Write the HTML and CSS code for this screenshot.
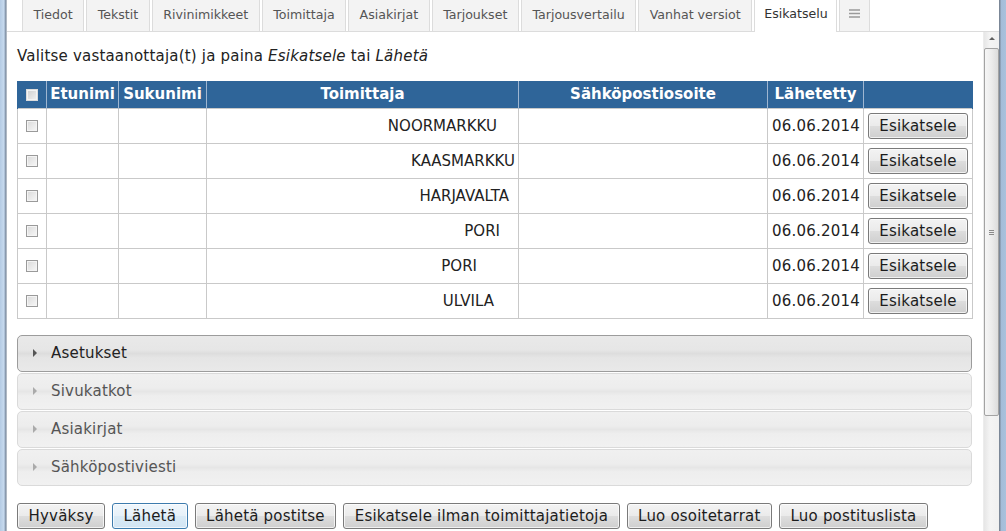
FILE: index.html
```html
<!DOCTYPE html>
<html lang="fi">
<head>
<meta charset="utf-8">
<title>Esikatselu</title>
<link rel="stylesheet" href="styles.css">
</head>
<body>
<div class="screen">
  <div class="frame-left"></div>
  <div class="window">
    <ul class="tabs">
      <li class="tab">Tiedot</li>
      <li class="tab">Tekstit</li>
      <li class="tab">Rivinimikkeet</li>
      <li class="tab">Toimittaja</li>
      <li class="tab">Asiakirjat</li>
      <li class="tab">Tarjoukset</li>
      <li class="tab">Tarjousvertailu</li>
      <li class="tab">Vanhat versiot</li>
      <li class="tab active">Esikatselu</li>
      <li class="tab menu"><svg width="11" height="9" viewBox="0 0 11 9"><path d="M0 1h11M0 4.5h11M0 8h11" stroke="#9a9a9a" stroke-width="1.4"/></svg></li>
    </ul>
    <div class="pane">
      <div class="content">
        <p class="intro">Valitse vastaanottaja(t) ja paina <em>Esikatsele</em> tai <em>Lähetä</em></p>
        <table class="grid">
          <colgroup>
            <col class="c-check"><col class="c-first"><col class="c-last"><col class="c-supplier"><col class="c-email"><col class="c-date"><col class="c-action">
          </colgroup>
          <thead>
            <tr>
              <th><span class="check head"></span></th>
              <th>Etunimi</th>
              <th>Sukunimi</th>
              <th>Toimittaja</th>
              <th>Sähköpostiosoite</th>
              <th>Lähetetty</th>
              <th></th>
            </tr>
          </thead>
          <tbody>
            <tr>
              <td class="cc"><span class="check"></span></td><td></td><td></td>
              <td class="supplier pr21">NOORMARKKU</td><td></td>
              <td class="date">06.06.2014</td><td class="act"><button class="btn row-btn">Esikatsele</button></td>
            </tr>
            <tr>
              <td class="cc"><span class="check"></span></td><td></td><td></td>
              <td class="supplier pr3">KAASMARKKU</td><td></td>
              <td class="date">06.06.2014</td><td class="act"><button class="btn row-btn">Esikatsele</button></td>
            </tr>
            <tr>
              <td class="cc"><span class="check"></span></td><td></td><td></td>
              <td class="supplier pr9">HARJAVALTA</td><td></td>
              <td class="date">06.06.2014</td><td class="act"><button class="btn row-btn">Esikatsele</button></td>
            </tr>
            <tr>
              <td class="cc"><span class="check"></span></td><td></td><td></td>
              <td class="supplier pr18">PORI</td><td></td>
              <td class="date">06.06.2014</td><td class="act"><button class="btn row-btn">Esikatsele</button></td>
            </tr>
            <tr>
              <td class="cc"><span class="check"></span></td><td></td><td></td>
              <td class="supplier pr41">PORI</td><td></td>
              <td class="date">06.06.2014</td><td class="act"><button class="btn row-btn">Esikatsele</button></td>
            </tr>
            <tr>
              <td class="cc"><span class="check"></span></td><td></td><td></td>
              <td class="supplier pr24">ULVILA</td><td></td>
              <td class="date">06.06.2014</td><td class="act"><button class="btn row-btn">Esikatsele</button></td>
            </tr>
          </tbody>
        </table>
        <div class="accordion">
          <div class="acc-head first"><span class="tri"></span>Asetukset</div>
          <div class="acc-head"><span class="tri"></span>Sivukatkot</div>
          <div class="acc-head"><span class="tri"></span>Asiakirjat</div>
          <div class="acc-head"><span class="tri"></span>Sähköpostiviesti</div>
        </div>
        <div class="actions">
          <button class="btn">Hyväksy</button>
          <button class="btn focus">Lähetä</button>
          <button class="btn">Lähetä postitse</button>
          <button class="btn">Esikatsele ilman toimittajatietoja</button>
          <button class="btn">Luo osoitetarrat</button>
          <button class="btn">Luo postituslista</button>
        </div>
      </div>
      <div class="scrollbar">
        <div class="arrow-up"></div>
        <div class="thumb"><span class="grip"></span></div>
      </div>
    </div>
  </div>
  <div class="frame-right"></div>
</div>
</body>
</html>
```
FILE: styles.css
```css
* { box-sizing: border-box; }
html, body { margin: 0; padding: 0; }
body {
  font-family: "DejaVu Sans", Verdana, sans-serif;
  color: #222;
  background: #fff;
  width: 1006px;
  height: 531px;
  overflow: hidden;
}
.screen {
  display: flex;
  height: 531px;
}
.frame-left {
  width: 7px;
  background: linear-gradient(to right, #b4cbe4 0, #c7daee 4px, #93a7bf 5px, #7f8c9c 6px, #dfe4ea 7px);
}
.frame-right {
  width: 7px;
  background: linear-gradient(to right, #7b8797 0, #7b8797 1px, #a4bcd8 2px, #a9c1dc 7px);
}
.window {
  flex: 1;
  display: flex;
  flex-direction: column;
  min-width: 0;
}
.tabs {
  list-style: none;
  margin: 0;
  padding: 0 0 0 15px;
  height: 32px;
  display: flex;
  align-items: flex-end;
  border-bottom: 1px solid #dcdcdc;
  flex-shrink: 0;
}
.tab {
  height: 31px;
  line-height: 30px;
  padding: 0 10.5px;
  margin-right: 2px;
  font-size: 12.6px;
  color: #555;
  background: #f3f3f3;
  border: 1px solid #dcdcdc;
  border-top: none;
  border-bottom: none;
  white-space: nowrap;
}
.tab.active {
  background: #fff;
  color: #333;
  height: 32px;
  margin-bottom: -1px;
  padding: 0 8px 0 9px;
  line-height: 28px;
}
.tab.menu {
  padding: 0 9px;
  display: flex;
  align-items: center;
  padding-bottom: 4px;
  margin-right: 0;
}
.pane {
  flex: 1;
  display: flex;
  min-height: 0;
}
.content {
  flex: 1;
  padding: 14px 11px 0 10px;
  overflow: hidden;
  min-width: 0;
}
.intro {
  margin: 0 0 14px 0;
  font-size: 15px;
  line-height: 21px;
  letter-spacing: 0.2px;
  color: #222;
}
.grid {
  width: 955px;
  table-layout: fixed;
  border-collapse: collapse;
  font-size: 15px;
}
.c-check { width: 29px; }
.c-first { width: 72px; }
.c-last { width: 88px; }
.c-supplier { width: 312px; }
.c-email { width: 249px; }
.c-date { width: 96px; }
.c-action { width: 109px; }
.grid th {
  height: 27px;
  padding: 0;
  background: #2f6599;
  color: #fff;
  font-weight: bold;
  text-align: center;
  border-left: 1px solid #9fb6d1;
  border-right: 1px solid #9fb6d1;
  white-space: nowrap;
}
.grid th:first-child { border-left: 1px solid #2f6599; }
.grid th:last-child { border-right: 1px solid #2f6599; }
.grid td {
  height: 35px;
  padding: 0 4px;
  border: 1px solid #c9c9c9;
  color: #222;
  white-space: nowrap;
}
.grid td.cc { text-align: center; padding: 0; }
.grid td.supplier { text-align: right; }
.pr3 { padding-right: 3px !important; }
.pr9 { padding-right: 9px !important; }
.pr18 { padding-right: 18px !important; }
.pr21 { padding-right: 21px !important; }
.pr24 { padding-right: 24px !important; }
.pr41 { padding-right: 41px !important; }
.grid td.date { padding-left: 4px; letter-spacing: 0.2px; }
.grid td.act { padding: 0 0 0 4px; }
.check {
  display: inline-block;
  width: 12px;
  height: 12px;
  vertical-align: middle;
  border: 1px solid #9a9a9a;
  background: linear-gradient(135deg, #d8d8d8 0%, #e9e9e9 50%, #f7f7f7 100%);
  box-shadow: inset 0 0 0 1px #f4f4f4;
}
.check.head {
  border-color: #dcdcdc;
  background: linear-gradient(135deg, #cfcfcf, #f2f2f2);
}
.btn {
  font-family: "DejaVu Sans", Verdana, sans-serif;
  font-size: 15px;
  letter-spacing: 0.2px;
  color: #1c1c1c;
  height: 26px;
  padding: 0 10.5px;
  border: 1px solid #7a7a7a;
  border-radius: 3px;
  background: linear-gradient(#f3f3f3 0%, #ebebeb 48%, #dddddd 52%, #cfcfcf 100%);
  box-shadow: inset 0 0 0 1px rgba(255,255,255,0.7);
  line-height: 22px;
  white-space: nowrap;
}
.row-btn {
  width: 100px;
  padding: 0;
  height: 26px;
  vertical-align: middle;
}
.btn.focus {
  border-color: #3d7bad;
  background: linear-gradient(#f0f7fc 0%, #e6f1f9 48%, #d9eaf6 52%, #d2e5f3 100%);
}
.accordion {
  margin-top: 16px;
  width: 955px;
  display: flex;
  flex-direction: column;
  gap: 1px;
}
.acc-head {
  height: 37px;
  display: flex;
  align-items: center;
  padding-left: 15px;
  font-size: 15px;
  letter-spacing: 0.2px;
  color: #555;
  border: 1px solid #dadada;
  border-radius: 5px;
  background: linear-gradient(#f0f0f0 0%, #ededed 40%, #e6e6e6 50%, #eeeeee 62%, #f1f1f1 100%);
}
.acc-head.first {
  color: #222;
  border-color: #9c9c9c;
  background: linear-gradient(#e9e9e9 0%, #e6e6e6 40%, #dddddd 50%, #e5e5e5 62%, #e9e9e9 100%);
}
.tri {
  width: 0;
  height: 0;
  border-top: 4px solid transparent;
  border-bottom: 4px solid transparent;
  border-left: 4px solid #aaa;
  margin-right: 14px;
}
.acc-head.first .tri { border-left-color: #555; }
.actions {
  margin-top: 17px;
  display: flex;
  gap: 7px;
}
.scrollbar {
  width: 16px;
  flex-shrink: 0;
  background: linear-gradient(to right, #e6e6e6, #f4f4f4 40%, #f0f0f0);
  border-left: 1px solid #ececec;
  padding-top: 5px;
  display: flex;
  flex-direction: column;
  align-items: center;
}
.arrow-up {
  width: 0;
  height: 0;
  border-left: 3px solid transparent;
  border-right: 3px solid transparent;
  border-bottom: 3px solid #606060;
  margin-bottom: 8px;
}
.thumb {
  width: 15px;
  height: 368px;
  border: 1px solid #a3a3a3;
  border-radius: 2px;
  background: linear-gradient(to right, #f6f6f6, #ececec 50%, #dcdcdc);
  display: flex;
  align-items: center;
  justify-content: center;
}
.grip {
  width: 5px;
  height: 5px;
  border-top: 1px solid #8a8a8a;
  border-bottom: 1px solid #8a8a8a;
  position: relative;
}
.grip::after {
  content: "";
  position: absolute;
  left: 0;
  right: 0;
  top: 1px;
  border-top: 1px solid #8a8a8a;
}
```
